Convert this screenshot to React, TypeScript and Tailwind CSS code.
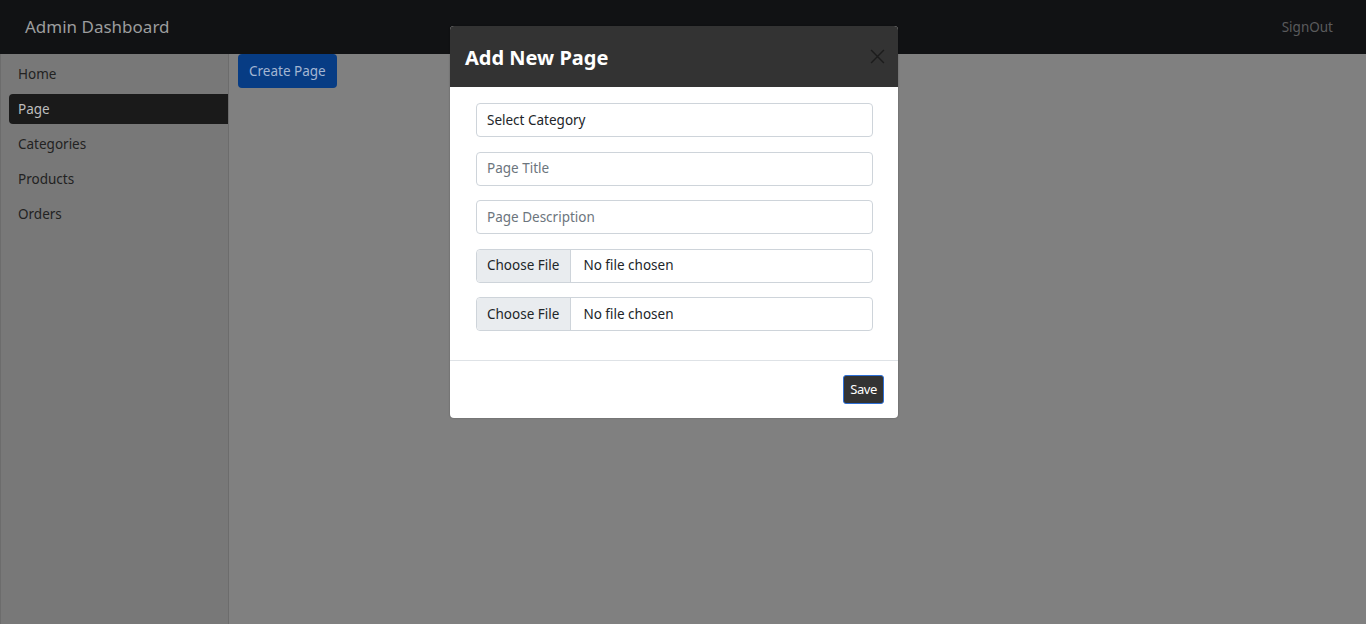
import React from "react";

const font = { fontFamily: '"Segoe UI", "Noto Sans", "Open Sans", sans-serif' };

function FileRow() {
  return (
    <div className="flex h-[34px] items-stretch rounded-[4px] border border-[#ced4da] bg-white text-[13.5px] text-[#212529]">
      <div className="flex items-center rounded-l-[4px] border-r border-[#ced4da] bg-[#e9ecef] pl-[10px] pr-[11px]">Choose File</div>
      <div className="flex items-center pl-[12px]">No file chosen</div>
    </div>
  );
}

function Field({ text, placeholder }: { text: string; placeholder?: boolean }) {
  return (
    <div
      className={`flex h-[34px] items-center rounded-[4px] border border-[#ced4da] bg-white px-[10px] text-[13.5px] ${
        placeholder ? "text-[#6c757d]" : "text-[#212529]"
      }`}
    >
      {text}
    </div>
  );
}

export default function App() {
  const items = ["Home", "Page", "Categories", "Products", "Orders"];
  return (
    <div className="relative flex h-[624px] w-[1366px] flex-col overflow-hidden bg-[#808080]" style={font}>
      <header className="flex h-[54px] shrink-0 items-center justify-between bg-[#111214] pl-[25px] pr-[33px]">
        <span className="text-[17px] text-[#9c9d9e]">Admin Dashboard</span>
        <span className="text-[13.5px] text-[#5a5b5c]">SignOut</span>
      </header>
      <div className="flex flex-1">
        <aside className="w-[229px] shrink-0 border-l border-r border-[#6c6c6c] bg-[#787878] pl-[8px] pt-[2px]">
          {items.map((it) =>
            it === "Page" ? (
              <div key={it} className="flex h-[35px] items-center">
                <div className="flex h-[30px] w-full items-center rounded-l-[4px] bg-[#1a1a1a] pl-[9px] pt-[2px] text-[13.5px] text-[#bdbdbd]">
                  {it}
                </div>
              </div>
            ) : (
              <div key={it} className="flex h-[35px] items-center pl-[9px] pt-[2px] text-[13.5px] text-[#222]">
                {it}
              </div>
            )
          )}
        </aside>
        <main className="flex-1 pl-[9px]">
          <button className="h-[34px] rounded-[4px] bg-[#073c84] px-[11px] text-[13.5px] text-[#a3b6d2]">Create Page</button>
        </main>
      </div>

      <div className="absolute left-[450px] top-[26px] w-[448px] overflow-hidden rounded-[4px] bg-white shadow-[0_0_2px_rgba(0,0,0,0.3)]">
        <div className="flex h-[61px] items-center justify-between bg-[#333333] pl-[15px] pr-[13px] pt-[3px]">
          <span className="text-[20px] font-bold text-white">Add New Page</span>
          <svg width="15" height="15" viewBox="0 0 14 14" className="mb-[4px]">
            <path d="M1 1 L13 13 M13 1 L1 13" stroke="#1c1c1c" strokeWidth="1.3" fill="none" />
          </svg>
        </div>
        <div className="flex flex-col gap-[14.5px] pl-[26px] pr-[25px] pb-[29px] pt-[16px]">
          <Field text="Select Category" />
          <Field text="Page Title" placeholder />
          <Field text="Page Description" placeholder />
          <FileRow />
          <FileRow />
        </div>
        <div className="flex justify-end border-t border-[#dee2e6] px-[14px] pb-[14px] pt-[14px]">
          <button className="h-[29px] rounded-[3px] border border-[#2d6fd6] bg-[#333333] px-[6px] text-[13px] tracking-[-0.4px] text-white">
            Save
          </button>
        </div>
      </div>
    </div>
  );
}
